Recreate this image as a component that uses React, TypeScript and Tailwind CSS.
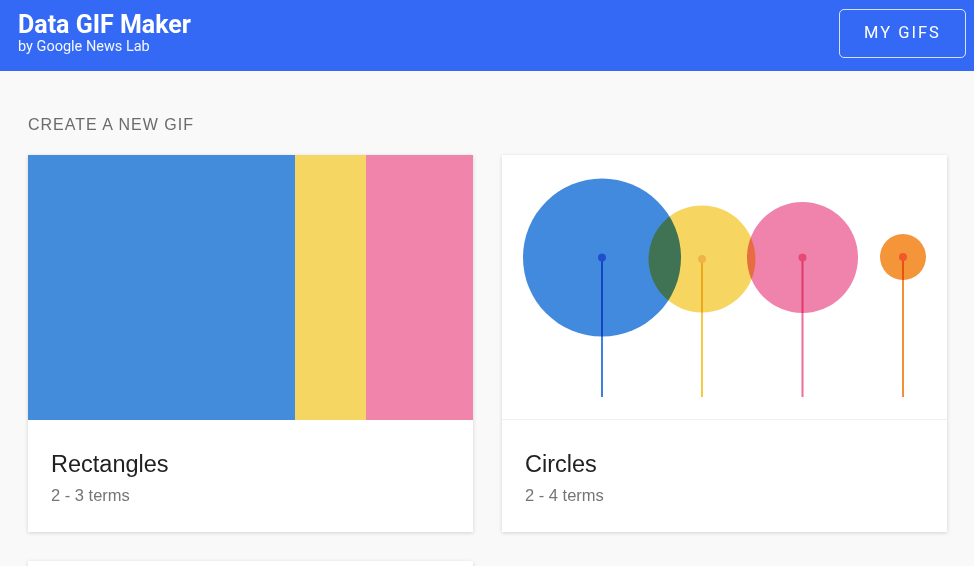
import React from 'react';

const templates = [
  { name: 'Rectangles', terms: '2 - 3 terms', kind: 'rect' },
  { name: 'Circles', terms: '2 - 4 terms', kind: 'circle' },
];

const RectPreview = () => (
  <div className="flex h-[265px] w-full">
    <div className="w-[267px] bg-[#438bdb]" />
    <div className="w-[71px] bg-[#f5d662]" />
    <div className="flex-1 bg-[#f084ab]" />
  </div>
);

const circles = [
  { cx: 100, cy: 102.5, r: 79, fill: '#428ade', line: '#3d80e0', dot: '#1f4fcc' },
  { cx: 200, cy: 104, r: 53.5, fill: '#f6d560', line: '#f5c944', dot: '#f0b34a' },
  { cx: 300.5, cy: 102.5, r: 55.5, fill: '#f083ab', line: '#ee6d9c', dot: '#e84a74' },
  { cx: 401, cy: 102, r: 23, fill: '#f39538', line: '#f29034', dot: '#ee5a2e' },
];

const CirclePreview = () => (
  <div className="h-[265px] w-full border-b border-[#f0f0f0]">
    <svg width="445" height="265" viewBox="0 0 445 265">
      {circles.map((c, i) => (
        <circle key={'c' + i} cx={c.cx} cy={c.cy} r={c.r} fill={c.fill} className="mix-blend-multiply" />
      ))}
      {circles.map((c, i) => (
        <g key={'l' + i}>
          <line x1={c.cx} y1={c.cy} x2={c.cx} y2={242} stroke={c.line} strokeWidth="2" className="mix-blend-multiply" />
          <circle cx={c.cx} cy={c.cy} r="4" fill={c.dot} />
        </g>
      ))}
    </svg>
  </div>
);

export default function App() {
  return (
    <div className="min-h-screen bg-[#f9f9f9] font-['Liberation_Sans',Arial,sans-serif]">
      {/* Header */}
      <header className="flex h-[71px] items-start justify-between bg-[#3369f4] pl-[18px] pr-[8px]">
        <div className="mt-[10px] flex flex-col font-['Roboto',sans-serif] text-white">
          <span className="text-[25px] font-bold leading-[29px]">Data GIF Maker</span>
          <span className="text-[14.5px] leading-[16px] opacity-95">by Google News Lab</span>
        </div>
        <button className="mt-[9px] h-[49px] w-[127px] rounded-[5px] border-[1.5px] border-white/80 font-['Roboto',sans-serif] text-[16.5px] tracking-[2px] text-white">
          MY GIFS
        </button>
      </header>

      <main className="px-[28px] pt-[44px]">
        <h2 className="text-[16px] leading-[20px] tracking-[1px] text-[#6b6b6b]">CREATE A NEW GIF</h2>
        <div className="mt-[20px] grid grid-cols-[445px_445px] gap-x-[29px] gap-y-[29px]">
          {templates.map((t) => (
            <div key={t.name} className="overflow-hidden bg-white shadow-[0_1px_4px_rgba(0,0,0,0.16)]">
              {t.kind === 'rect' ? <RectPreview /> : <CirclePreview />}
              <div className="h-[112px] pl-[23px] pt-[30px]">
                <div className="text-[23.5px] leading-[28px] text-[#212121]">{t.name}</div>
                <div className="mt-[7px] text-[16.5px] leading-[20px] text-[#757575]">{t.terms}</div>
              </div>
            </div>
          ))}
          <div className="h-[200px] bg-white shadow-[0_1px_4px_rgba(0,0,0,0.16)]" />
        </div>
      </main>
    </div>
  );
}
